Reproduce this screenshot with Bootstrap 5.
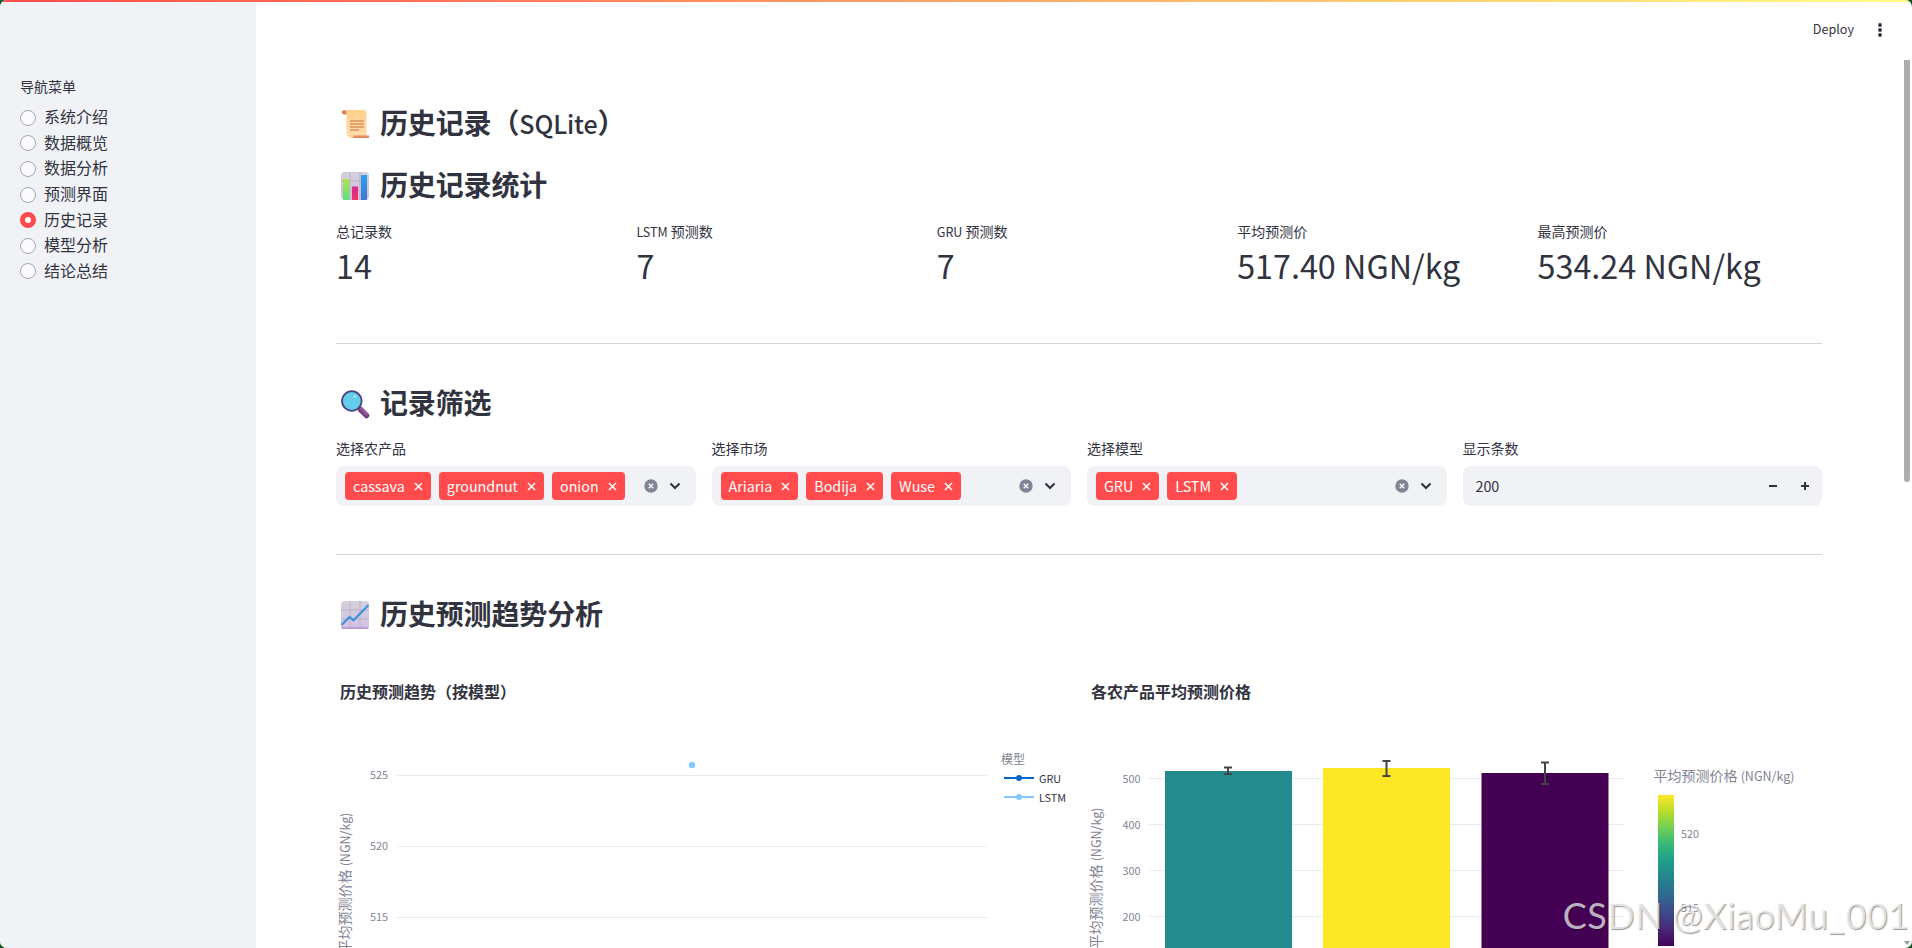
<!DOCTYPE html>
<html lang="zh-CN">
<head>
<meta charset="utf-8">
<meta name="viewport" content="width=device-width, initial-scale=1">
<title>历史记录</title>
<link href="https://cdn.jsdelivr.net/npm/bootstrap@5.3.0/dist/css/bootstrap.min.css" rel="stylesheet">
<style>
html{background:#0f5a2b}
body{font-family:"Noto Sans CJK SC",sans-serif;color:#31333f;background:#0f5a2b;height:948px;overflow:hidden;line-height:1.5}
.app{height:948px;background:#fff;border-radius:7px;overflow:hidden;position:relative}
.topline{position:absolute;left:0;right:0;top:0;height:2px;background:linear-gradient(90deg,#ff4b4b,#fffd80);z-index:3}
.side{width:256px;background:#f0f2f6;padding:75px 20px 0;flex:none}
.en{font-size:.895em;line-height:0}
.cap{font-size:14px;line-height:22px}
.side .cap{margin-bottom:8px}
.opt{height:25.6px;font-size:16px;gap:8px}
.opt span:last-child{padding-bottom:3px}
.dot{width:16px;height:16px;border-radius:50%;border:1px solid #a3a8b4;background:#fafafc;flex:none}
.dot.on{border:5px solid #ff4b4b;background:#fff}
.topbar{height:60px;padding-right:26px;font-size:12.6px}
.deploy{margin-right:20px;padding-bottom:1px}
.main{padding:0 90px 0 80px}
.ttl{font-size:28px;font-weight:600;height:34px;line-height:34px;letter-spacing:-.005em;margin:46px 0 0;padding-left:3px;gap:9px}
.ttl>span{padding-bottom:2px}
.ttl .en{font-weight:500}
.ttl svg{width:32px;height:32px;flex:none;margin-top:1px}
.ttl.second{margin-top:28px}
.ttl.after-rule{margin-top:42px}
.c5{display:grid;grid-template-columns:repeat(5,1fr);column-gap:16px;margin-top:18px}
.c4{display:grid;grid-template-columns:repeat(4,1fr);column-gap:16px;margin-top:17px}
.val{font-size:32.3px;line-height:46px}
.rule{height:1px;background:#d6d6d9}
.box{height:40px;border-radius:8px;background:#f0f2f6;padding:0 15px 0 9px;margin-top:7px}
.box.num{padding:0 12px 0 13px;font-size:14.3px}
.box .chev{margin-left:11px}
.tag{height:28px;border-radius:4px;background:#ff4b4b;color:#fff;font-size:14.3px;padding:0 8px;gap:9px;margin-right:8px}
.tag svg{width:9px;height:9px}
.charts{margin-top:19px}
.scroll{position:absolute;right:2px;top:60px;width:6px;height:422px;background:#acacb1;border-radius:0 0 3px 3px}
.arrow{position:absolute;right:2px;bottom:3px;border:3px solid transparent;border-top:4px solid #999;border-bottom:0}
.wm{position:absolute;right:3px;bottom:9px;font-family:Lato,sans-serif;font-size:36px;letter-spacing:.4px;line-height:48px;color:rgba(255,255,255,.7);text-shadow:1px 1px 1px rgba(0,0,0,.4);white-space:nowrap}
svg text{fill:#808495}
svg .dk{fill:#31333f}
</style>
</head>
<body>
<svg width="0" height="0" class="position-absolute">
<defs>
<symbol id="x" viewBox="0 0 9 9"><path d="M1 1l7 7M8 1l-7 7" stroke="#fff" stroke-width="1.5" fill="none"/></symbol>
<symbol id="clr" viewBox="0 0 14 14"><circle cx="7" cy="7" r="6.7" fill="#808495"/><path d="M4.8 4.8l4.4 4.4M9.2 4.8L4.8 9.2" stroke="#f0f2f6" stroke-width="1.6"/></symbol>
<symbol id="chev" viewBox="0 0 12 8"><path d="M1.5 1.5L6 6l4.500-4.500" stroke="#31333f" stroke-width="2.1" fill="none"/></symbol>
<linearGradient id="paper" x2="0" y2="1"><stop stop-color="#ffd08a"/><stop offset="1" stop-color="#ffdcae"/></linearGradient>
<linearGradient id="tile" x2="0" y2="1"><stop stop-color="#d5d0dc"/><stop offset="1" stop-color="#d2c1e4"/></linearGradient>
<linearGradient id="gr" x2="0" y2="1"><stop stop-color="#b3e04f"/><stop offset="1" stop-color="#5ee07f"/></linearGradient>
<linearGradient id="pk" x2="0" y2="1"><stop stop-color="#d52c8c"/><stop offset="1" stop-color="#f5326b"/></linearGradient>
<linearGradient id="bl" x2="0" y2="1"><stop stop-color="#2ba0ee"/><stop offset="1" stop-color="#3f78cf"/></linearGradient>
<linearGradient id="vir" x2="0" y2="1"><stop stop-color="#fde725"/><stop offset=".11" stop-color="#b5de2b"/><stop offset=".22" stop-color="#6ece58"/><stop offset=".33" stop-color="#35b779"/><stop offset=".44" stop-color="#1f9e89"/><stop offset=".56" stop-color="#26828e"/><stop offset=".67" stop-color="#31688e"/><stop offset=".78" stop-color="#3e4989"/><stop offset=".89" stop-color="#482878"/><stop offset="1" stop-color="#440154"/></linearGradient>
</defs>
</svg>
<div class="app d-flex">
  <div class="topline"></div>
  <aside class="side">
    <div class="cap">导航菜单</div>
    <div class="opt d-flex align-items-center"><span class="dot"></span><span>系统介绍</span></div>
    <div class="opt d-flex align-items-center"><span class="dot"></span><span>数据概览</span></div>
    <div class="opt d-flex align-items-center"><span class="dot"></span><span>数据分析</span></div>
    <div class="opt d-flex align-items-center"><span class="dot"></span><span>预测界面</span></div>
    <div class="opt d-flex align-items-center"><span class="dot on"></span><span>历史记录</span></div>
    <div class="opt d-flex align-items-center"><span class="dot"></span><span>模型分析</span></div>
    <div class="opt d-flex align-items-center"><span class="dot"></span><span>结论总结</span></div>
  </aside>
  <div class="flex-grow-1">
    <header class="topbar d-flex align-items-center justify-content-end">
      <span class="deploy">Deploy</span>
      <svg width="12" height="16" viewBox="0 0 12 16" fill="#31333f"><circle cx="6" cy="3" r="1.900"/><circle cx="6" cy="8" r="1.900"/><circle cx="6" cy="13" r="1.900"/></svg>
    </header>
    <main class="main">
      <h3 class="ttl d-flex align-items-center">
        <svg viewBox="0 0 32 32"><path d="M3 2.500h6v4H5.500A2.500 2.500 0 013 4z" fill="#d97b54"/><path d="M6 2h18.500q3 0 3 3.500v23H11q-3.500 0-3.500-4V6Q7.500 3 6 2z" fill="url(#paper)"/><path d="M11 13h14M11 16h14M11 19h14M11 22h9" stroke="#d9935f" stroke-width="1.300"/><path d="M14 27.500h16v2.500H12z" fill="#e68a62"/><path d="M8 25q0 5 5 5 2-.5 2-2.500H11z" fill="#ffd7a2"/></svg>
        <span>历史记录（<span class="en">SQLite</span>）</span></h3>
      <h3 class="ttl second d-flex align-items-center">
        <svg viewBox="0 0 32 32"><rect x="2" y="2" width="28" height="28" rx="4" fill="url(#tile)"/><path d="M11 2v28M21 2v28M2 11h28M2 20h28" stroke="#b8b2bf" stroke-width="1"/><path d="M4 9h6.500v21H5q-1 0-1-1z" fill="url(#gr)"/><path d="M13 16.500h6V30h-6z" fill="url(#pk)"/><path d="M22 5h6v25h-6z" fill="url(#bl)"/></svg>
        <span>历史记录统计</span></h3>
      <div class="c5">
        <div><div class="cap">总记录数</div><div class="val">14</div></div>
        <div><div class="cap"><span class="en">LSTM</span> 预测数</div><div class="val">7</div></div>
        <div><div class="cap"><span class="en">GRU</span> 预测数</div><div class="val">7</div></div>
        <div><div class="cap">平均预测价</div><div class="val">517.40 NGN/kg</div></div>
        <div><div class="cap">最高预测价</div><div class="val">534.24 NGN/kg</div></div>
      </div>
      <div class="rule" style="margin-top:55px"></div>
      <h3 class="ttl after-rule d-flex align-items-center">
        <svg viewBox="0 0 32 32"><path d="M21.500 21.500l6 6" stroke="#70417c" stroke-width="5.500" stroke-linecap="round" /><path d="M22 20.500l6 6" stroke="#9a5a99" stroke-width="2.300" stroke-linecap="round"/><circle cx="12.800" cy="13" r="9.800" fill="#63cdea" stroke="#51417d" stroke-width="1.800"/><circle cx="16" cy="8.500" r="1.600" fill="#a9e7f5"/></svg>
        <span>记录筛选</span></h3>
      <div class="c4">
        <div><div class="cap">选择农产品</div>
          <div class="box d-flex align-items-center">
            <span class="tag d-flex align-items-center">cassava<svg><use href="#x"/></svg></span><span class="tag d-flex align-items-center">groundnut<svg><use href="#x"/></svg></span><span class="tag d-flex align-items-center">onion<svg><use href="#x"/></svg></span>
            <svg class="ms-auto" width="14" height="14"><use href="#clr"/></svg><svg class="chev" width="12" height="8"><use href="#chev"/></svg></div></div>
        <div><div class="cap">选择市场</div>
          <div class="box d-flex align-items-center">
            <span class="tag d-flex align-items-center">Ariaria<svg><use href="#x"/></svg></span><span class="tag d-flex align-items-center">Bodija<svg><use href="#x"/></svg></span><span class="tag d-flex align-items-center">Wuse<svg><use href="#x"/></svg></span>
            <svg class="ms-auto" width="14" height="14"><use href="#clr"/></svg><svg class="chev" width="12" height="8"><use href="#chev"/></svg></div></div>
        <div><div class="cap">选择模型</div>
          <div class="box d-flex align-items-center">
            <span class="tag d-flex align-items-center">GRU<svg><use href="#x"/></svg></span><span class="tag d-flex align-items-center">LSTM<svg><use href="#x"/></svg></span>
            <svg class="ms-auto" width="14" height="14"><use href="#clr"/></svg><svg class="chev" width="12" height="8"><use href="#chev"/></svg></div></div>
        <div><div class="cap">显示条数</div>
          <div class="box num d-flex align-items-center">200
            <svg class="ms-auto" width="42" height="10" viewBox="0 0 42 10"><path d="M1 5h8M33 5h8M37 1v8" stroke="#31333f" stroke-width="2"/></svg></div></div>
      </div>
      <div class="rule" style="margin-top:48px"></div>
      <h3 class="ttl after-rule d-flex align-items-center">
        <svg viewBox="0 0 32 32"><rect x="2" y="2" width="28" height="28" rx="3.500" fill="url(#tile)"/><path d="M11 2v28M21 2v28M2 11h28M2 20h28" stroke="#bcb4c6" stroke-width="1"/><path d="M2.500 29h27" stroke="#b38fd0" stroke-width="1.500"/><path d="M2.500 26L10.500 18l4 3.200L29.500 6" stroke="#3b93dc" stroke-width="2.200" fill="none"/></svg>
        <span>历史预测趋势分析</span></h3>
      <div class="charts d-flex">
        <svg width="751" height="298" viewBox="336 650 751 298" font-size="10.8">
          <text class="dk" x="340" y="697.500" font-size="16" font-weight="600">历史预测趋势（按模型）</text>
          <path d="M397 775.500h590M397 846.500h590M397 917.500h590" stroke="#e6eaf1"/>
          <g text-anchor="end"><text x="388" y="779">525</text><text x="388" y="850">520</text><text x="388" y="921">515</text></g>
          <text transform="translate(349.500 953.500) rotate(-90)" font-size="14">平均预测价格 <tspan font-size="12.500">(NGN/kg)</tspan></text>
          <circle cx="692" cy="765" r="3.200" fill="#83c9ff"/>
          <text x="1001" y="764" font-size="12">模型</text>
          <path d="M1004 778h30" stroke="#0068c9" stroke-width="2"/><circle cx="1019" cy="778" r="3" fill="#0068c9"/>
          <path d="M1004 797h30" stroke="#83c9ff" stroke-width="2"/><circle cx="1019" cy="797" r="3" fill="#83c9ff"/>
          <text class="dk" x="1039" y="783">GRU</text><text class="dk" x="1039" y="802">LSTM</text>
        </svg>
        <svg width="735" height="298" viewBox="1087 650 735 298" font-size="10.8">
          <text class="dk" x="1091" y="697.500" font-size="16" font-weight="600">各农产品平均预测价格</text>
          <path d="M1149 778.500h475M1149 824.500h475M1149 870.500h475M1149 916.500h475" stroke="#e6eaf1"/>
          <g text-anchor="end"><text x="1140.500" y="783">500</text><text x="1140.500" y="829">400</text><text x="1140.500" y="875">300</text><text x="1140.500" y="921">200</text></g>
          <text transform="translate(1100.500 948.500) rotate(-90)" font-size="14">平均预测价格 <tspan font-size="12.500">(NGN/kg)</tspan></text>
          <path d="M1165 771h127v180h-127z" fill="#238a8d"/><path d="M1323 768h127v180h-127z" fill="#fde725"/><path d="M1481.500 773h127v180h-127z" fill="#440154"/>
          <path d="M1228 767.500v6.500M1224 767.500h8M1224 774h8M1386.500 761v15M1382.500 761h8M1382.500 776h8M1545 762.500v21.500M1541 762.500h8M1541 784h8" stroke="#444" stroke-width="2"/>
          <text x="1653.500" y="781" font-size="14">平均预测价格 <tspan font-size="12.500">(NGN/kg)</tspan></text>
          <path d="M1658 795h16v151h-16z" fill="url(#vir)"/>
          <text x="1681" y="838">520</text><text x="1681" y="912">515</text>
        </svg>
      </div>
    </main>
  </div>
  <div class="scroll"></div>
  <div class="arrow"></div>
  <div class="wm">CSDN @XiaoMu_001</div>
</div>
<script src="https://cdn.jsdelivr.net/npm/bootstrap@5.3.0/dist/js/bootstrap.bundle.min.js"></script>
</body>
</html>
